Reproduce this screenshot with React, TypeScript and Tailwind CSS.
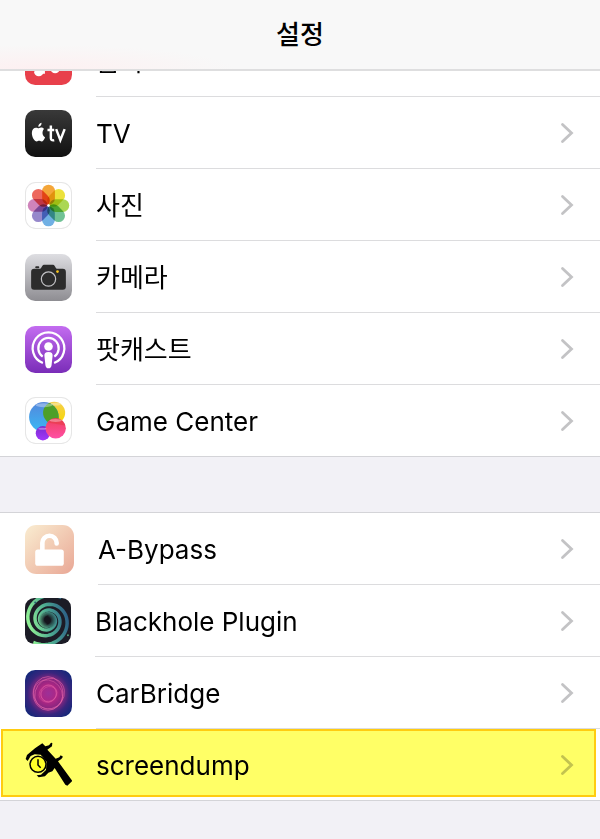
import type { ReactNode } from "react";

// Settings list — a frosted title bar over grouped rows.
// Every row is icon + label + chevron, the divider starts under the label.

type Item = {
  label: string;
  icon: ReactNode;
  highlighted?: boolean;
};

function MusicIcon() {
  return (
    <svg className="size-[47px] shrink-0" viewBox="0 0 46 46" aria-hidden="true">
      <rect width="46" height="46" rx="10" fill="#e8404b" />
      <path d="M17 11 34 8v22" fill="none" stroke="#fff" strokeWidth="3" />
      <path d="M18 11v24" stroke="#fff" strokeWidth="3" />
      <ellipse cx="13.500" cy="33.500" rx="4.500" ry="4" fill="#fff" />
      <ellipse cx="29.500" cy="30.500" rx="4.500" ry="4" fill="#fff" />
    </svg>
  );
}

function TvIcon() {
  return (
    <svg className="size-[47px] shrink-0" viewBox="0 0 46 46" aria-hidden="true">
      <defs>
        <linearGradient id="tv-bg" x2="0" y2="1">
          <stop stopColor="#393939" />
          <stop offset="1" stopColor="#111" />
        </linearGradient>
      </defs>
      <rect width="46" height="46" rx="10" fill="url(#tv-bg)" />
      <path
        d="M18.600 18.700c-1.200-1.700-3.300-1.800-4.700-1-.6.300-1 .3-1.600 0-2.400-1.200-5.600.6-5.600 4.800 0 4 2.400 8.300 4.900 8.300.8 0 1.200-.6 2.200-.6s1.400.6 2.300.6c1.700 0 3-2.300 3.500-4.200-3-1.400-3.100-6-1-7.900z"
        fill="#fff"
      />
      <path d="M13 16.500c-.2-2 1.300-3.700 3.200-4 .2 2.100-1.200 3.900-3.200 4z" fill="#fff" />
      <path
        d="M25.300 15.200v12.300c0 1.900 1 2.500 3.300 2.100M22 19.600h6.600M30.500 18.700l4.100 10.800 4.200-10.800"
        fill="none"
        stroke="#fff"
        strokeWidth="2.400"
      />
    </svg>
  );
}

const petals = [
  "#f39a1e",
  "#e9dd20",
  "#9fd13c",
  "#5cb986",
  "#5da5e0",
  "#8878c4",
  "#c873b2",
  "#ea5348",
];

function PhotosIcon() {
  return (
    <svg className="size-[47px] shrink-0" viewBox="0 0 46 46" aria-hidden="true">
      <rect x=".5" y=".5" width="45" height="45" rx="10" fill="#fff" stroke="#e6e6e6" />
      {petals.map((color, i) => (
        <rect
          key={color}
          x="16.800"
          y="2.700"
          width="12.500"
          height="19.500"
          rx="6.200"
          fill={color}
          fillOpacity=".88"
          transform={`rotate(${i * 45} 23 23)`}
          className="mix-blend-multiply"
        />
      ))}
      <circle cx="23" cy="23" r="1.200" fill="#fff" />
    </svg>
  );
}

function CameraIcon() {
  return (
    <svg className="size-[47px] shrink-0" viewBox="0 0 46 46" aria-hidden="true">
      <defs>
        <linearGradient id="camera-bg" x2="0" y2="1">
          <stop stopColor="#dedee2" />
          <stop offset="1" stopColor="#8e8d92" />
        </linearGradient>
      </defs>
      <rect width="46" height="46" rx="10" fill="url(#camera-bg)" />
      <rect x="10" y="12" width="4" height="2" rx="1" fill="#2c2c2c" />
      <path
        d="M9 14.500h5.500c1.500 0 2-3.500 4-4h9c2 .5 2.500 4 4 4H37c2 0 3 1 3 3V32c0 2-1 3-3 3H9c-2 0-3-1-3-3V17.500c0-2 1-3 3-3z"
        fill="#2c2c2c"
      />
      <circle cx="23" cy="24.500" r="7" fill="none" stroke="#c2c2c5" strokeWidth="1.200" />
      <circle cx="31.800" cy="17.200" r="1.300" fill="#fac71e" />
    </svg>
  );
}

function PodcastsIcon() {
  return (
    <svg className="size-[47px] shrink-0" viewBox="0 0 46 46" aria-hidden="true">
      <defs>
        <linearGradient id="podcasts-bg" x2="0" y2="1">
          <stop stopColor="#c36cf0" />
          <stop offset="1" stopColor="#7a2db8" />
        </linearGradient>
      </defs>
      <rect width="46" height="46" rx="10" fill="url(#podcasts-bg)" />
      <g fill="none" stroke="#fff" strokeWidth="2.200">
        <path d="M17.500 36.200a15.500 15.500 0 1 1 11 0" />
        <path d="M17.300 29.900a10 10 0 1 1 11.400 0" />
      </g>
      <circle cx="23" cy="20" r="4.200" fill="#fff" />
      <path
        d="M23 25.500c3 0 4.300 1.200 4 3.800l-1 9c-.3 2-1.200 3-3 3s-2.700-1-3-3l-1-9c-.3-2.600 1-3.800 4-3.800z"
        fill="#fff"
      />
    </svg>
  );
}

function GameCenterIcon() {
  return (
    <svg className="size-[47px] shrink-0" viewBox="0 0 46 46" aria-hidden="true">
      <defs>
        <linearGradient id="gc-blue" x2="0" y2="1">
          <stop stopColor="#5487dc" />
          <stop offset="1" stopColor="#39b8f4" />
        </linearGradient>
        <linearGradient id="gc-yellow" x2="0" y2="1">
          <stop stopColor="#f5cf4e" />
          <stop offset="1" stopColor="#f6d800" />
        </linearGradient>
        <linearGradient id="gc-pink" x2="0" y2="1">
          <stop stopColor="#f0405c" />
          <stop offset="1" stopColor="#ff4fa5" />
        </linearGradient>
        <linearGradient id="gc-purple" x2="0" y2="1">
          <stop stopColor="#7a2bd0" />
          <stop offset="1" stopColor="#a238fa" />
        </linearGradient>
        <clipPath id="gc-blue-clip">
          <circle cx="18.500" cy="19.500" r="14.500" />
        </clipPath>
      </defs>
      <rect x=".5" y=".5" width="45" height="45" rx="10" fill="#fff" stroke="#e6e6e6" />
      <circle cx="28.500" cy="15.500" r="10.800" fill="url(#gc-yellow)" />
      <circle cx="18.500" cy="19.500" r="14.500" fill="url(#gc-blue)" />
      <circle cx="28.500" cy="15.500" r="10.800" fill="#4d9f28" clipPath="url(#gc-blue-clip)" />
      <circle cx="17.500" cy="35.500" r="7" fill="url(#gc-purple)" />
      <circle cx="30" cy="30.500" r="10" fill="url(#gc-pink)" />
      <path d="M22 25c3-2 6-3 10-4 3 .5 6 3 7.500 7z" fill="#e33a3f" fillOpacity=".5" />
      <g fill="#fff" fillOpacity=".35">
        <ellipse cx="18.500" cy="8" rx="8" ry="2" />
        <ellipse cx="30" cy="7" rx="5" ry="1.300" />
        <ellipse cx="30" cy="23" rx="6" ry="1.500" />
        <ellipse cx="17" cy="31" rx="4" ry="1" />
      </g>
    </svg>
  );
}

function BypassIcon() {
  return (
    <svg className="size-[49px] shrink-0" viewBox="0 0 48 48" aria-hidden="true">
      <defs>
        <linearGradient id="bypass-bg" x2="1" y2="1">
          <stop offset=".1" stopColor="#f8e6cb" />
          <stop offset="1" stopColor="#e9a795" />
        </linearGradient>
      </defs>
      <rect width="48" height="48" rx="11" fill="url(#bypass-bg)" />
      <path
        d="M17 26v-8.500a7 7 0 0 1 14 0v.5"
        fill="none"
        stroke="#fff"
        strokeWidth="4.500"
        strokeLinecap="round"
      />
      <rect x="10" y="24" width="28" height="16" rx="2.500" fill="#fff" />
    </svg>
  );
}

// Logarithmic spiral arm, winding clockwise outward from the center
function spiralArm(startAngle: number) {
  const points: string[] = [];
  for (let t = 0; t <= 13; t += 0.15) {
    const r = 4 * Math.exp(0.145 * t);
    const x = 22 + r * Math.cos(t + startAngle);
    const y = 21.5 + r * Math.sin(t + startAngle);
    points.push(`${x.toFixed(2)} ${y.toFixed(2)}`);
  }
  return `M${points.join("L")}`;
}

function BlackholeIcon() {
  return (
    <svg className="size-[46px] shrink-0" viewBox="0 0 45 45" aria-hidden="true">
      <defs>
        <linearGradient id="hole-arm" gradientUnits="userSpaceOnUse" x1="4" y1="26" x2="42" y2="18">
          <stop stopColor="#8ff095" />
          <stop offset=".5" stopColor="#4ba891" />
          <stop offset="1" stopColor="#2c5f86" />
        </linearGradient>
        <radialGradient id="hole-core">
          <stop offset=".3" stopColor="#15151d" />
          <stop offset="1" stopColor="#15151d" stopOpacity="0" />
        </radialGradient>
        <clipPath id="hole-clip">
          <rect width="45" height="45" rx="9" />
        </clipPath>
      </defs>
      <g clipPath="url(#hole-clip)">
        <rect width="45" height="45" fill="#1c1c26" />
        <g fill="none" stroke="url(#hole-arm)" strokeWidth="3.400">
          <path d={spiralArm(1.8)} />
          <path d={spiralArm(4.94)} />
        </g>
        <circle cx="22" cy="21.500" r="9" fill="url(#hole-core)" />
        <circle cx="10" cy="4.500" r="1" fill="#2b6173" />
        <circle cx="42" cy="36.500" r="1" fill="#55a07a" />
      </g>
    </svg>
  );
}

function CarBridgeIcon() {
  return (
    <svg className="size-[47px] shrink-0" viewBox="0 0 46 46" aria-hidden="true">
      <defs>
        <radialGradient id="car-bg" r=".62">
          <stop stopColor="#9c3098" />
          <stop offset=".3" stopColor="#ae2684" />
          <stop offset=".5" stopColor="#8a2680" />
          <stop offset=".72" stopColor="#38257d" />
          <stop offset="1" stopColor="#122879" />
        </radialGradient>
      </defs>
      <rect width="46" height="46" rx="10" fill="url(#car-bg)" />
      <g fill="none" stroke="#ee6aae" strokeWidth=".7">
        <ellipse cx="22.500" cy="23" rx="14.500" ry="16.500" strokeOpacity=".8" />
        <ellipse cx="24" cy="22.500" rx="14" ry="15.500" strokeOpacity=".7" transform="rotate(35 23 23)" />
        <ellipse cx="22" cy="23.500" rx="13.500" ry="15" strokeOpacity=".6" transform="rotate(-40 23 23)" />
        <ellipse cx="23" cy="23" rx="7.500" ry="8.500" strokeOpacity=".55" />
        <ellipse cx="23.500" cy="23" rx="7" ry="8" strokeOpacity=".45" transform="rotate(60 23 23)" />
        <ellipse cx="22.500" cy="23" rx="9" ry="8" strokeOpacity=".4" transform="rotate(-30 23 23)" />
      </g>
    </svg>
  );
}

function CaliperIcon() {
  return (
    <svg className="size-[47px] shrink-0" viewBox="15 18 141 141" aria-hidden="true">
      <path
        d="M67 25 76 34 87 31 93 23 97 24 96 34 82 44 107 71 118 67 122 61 129 65 124 72 114 79 157 138 142 152 136 149 104 99 97 109 85 113 75 124 56 127 50 121 63 119 78 105 80 80 62 59 44 58 32 63 23 78 17 72 21 60 45 40z"
        fill="#000"
      />
      <circle cx="54" cy="88" r="24" fill="#ff6" stroke="#000" strokeWidth="4.500" />
      <path d="M54 73v17l8 8" fill="none" stroke="#000" strokeWidth="4.500" />
    </svg>
  );
}

function Chevron() {
  return (
    <svg className="h-[22px] w-[14px] shrink-0" viewBox="0 0 14 22" aria-hidden="true">
      <path
        d="M2.500 2.500 11.500 11l-9 8.500"
        fill="none"
        stroke="#c3c3c5"
        strokeWidth="2.800"
        strokeLinecap="round"
      />
    </svg>
  );
}

const appleApps: Item[] = [
  { label: "음악", icon: <MusicIcon /> },
  { label: "TV", icon: <TvIcon /> },
  { label: "사진", icon: <PhotosIcon /> },
  { label: "카메라", icon: <CameraIcon /> },
  { label: "팟캐스트", icon: <PodcastsIcon /> },
  { label: "Game Center", icon: <GameCenterIcon /> },
];

const tweaks: Item[] = [
  { label: "A-Bypass", icon: <BypassIcon /> },
  { label: "Blackhole Plugin", icon: <BlackholeIcon /> },
  { label: "CarBridge", icon: <CarBridgeIcon /> },
  { label: "screendump", icon: <CaliperIcon />, highlighted: true },
];

function Row({ item }: { item: Item }) {
  return (
    <li className="group relative">
      <a href="#" className="flex items-center gap-6 pl-[25px]">
        {item.icon}
        <span className="flex h-[72px] flex-1 items-center justify-between border-b border-[#dcdcde] pr-[26px] group-last:h-[71px] group-last:border-b-0">
          <span className="pt-[2px]">{item.label}</span>
          <Chevron />
        </span>
      </a>
      {/* Marker drawn over the row, multiplied so the chevron shows through */}
      {item.highlighted && (
        <div className="pointer-events-none absolute top-0 right-1 bottom-[3px] left-px border-2 border-[#ffcc10] bg-[#ffff66] mix-blend-multiply" />
      )}
    </li>
  );
}

export default function App() {
  return (
    <div className="min-h-screen bg-[#f2f1f6] pb-10 font-['Inter','Noto_Sans_CJK_KR',sans-serif] text-[26px] leading-8 text-black">
      {/* Title bar — stays put while the list scrolls under it */}
      <header className="fixed inset-x-0 top-0 z-10 flex h-[71px] items-center justify-center border-b-2 border-[#dededf] bg-[#f8f8f8] bg-radial-[at_6%_100%] from-[#fdf0f1] to-[#f8f8f8] to-25%">
        <h1 className="font-medium">설정</h1>
      </header>

      <main className="pt-[25px]">
        <ul className="border-b border-[#d4d4d8] bg-white">
          {appleApps.map((item) => (
            <Row key={item.label} item={item} />
          ))}
        </ul>
        <ul className="mt-[55px] border-y border-[#d4d4d8] bg-white">
          {tweaks.map((item) => (
            <Row key={item.label} item={item} />
          ))}
        </ul>
      </main>
    </div>
  );
}
